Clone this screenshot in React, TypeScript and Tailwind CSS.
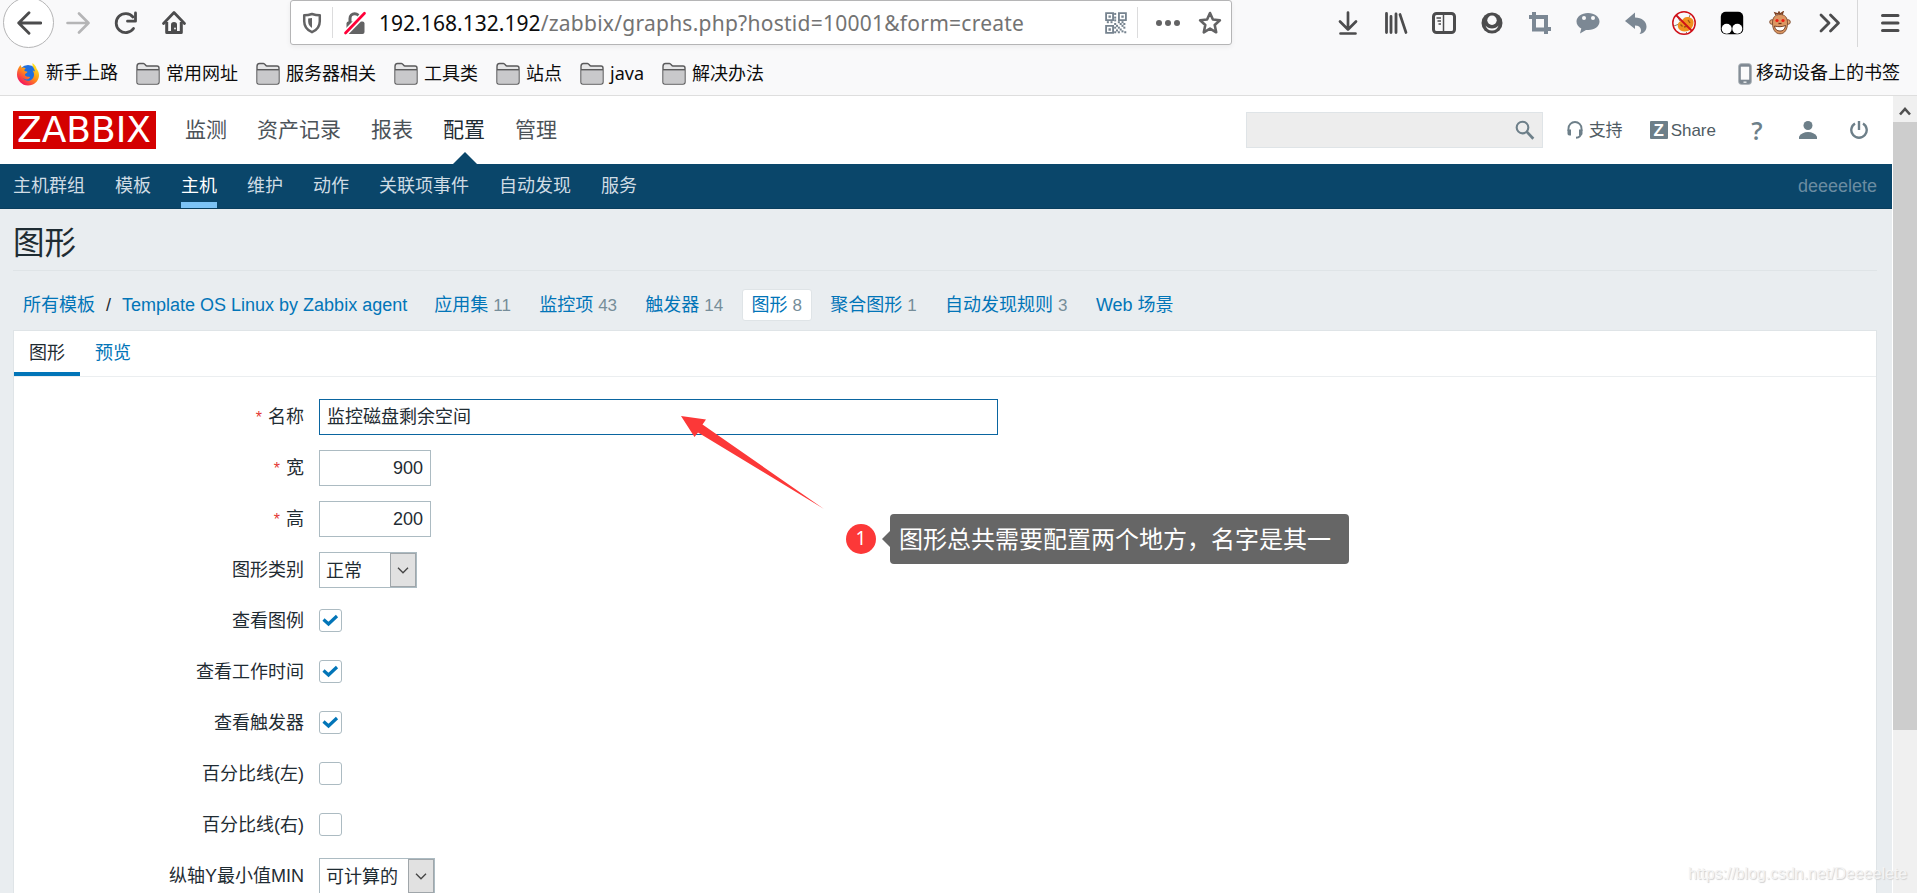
import type { ReactNode } from "react";
import clsx from "clsx";

const bookmarks = ["常用网址", "服务器相关", "工具类", "站点", "java", "解决办法"];
const mainMenu = ["监测", "资产记录", "报表", "配置", "管理"];
const subMenu = ["主机群组", "模板", "主机", "维护", "动作", "关联项事件", "自动发现", "服务"];
const hostTabs = [
  { label: "应用集", count: 11 },
  { label: "监控项", count: 43 },
  { label: "触发器", count: 14 },
  { label: "图形", count: 8, active: true },
  { label: "聚合图形", count: 1 },
  { label: "自动发现规则", count: 3 },
  { label: "Web 场景" },
];

type IconProps = { children: ReactNode; size?: number; className?: string };

function Icon({ children, size = 24, className }: IconProps) {
  return (
    <svg width={size} height={size} viewBox="0 0 24 24" fill="none" className={clsx("shrink-0", className)}>
      {children}
    </svg>
  );
}

function NavButtons() {
  return (
    <div className="flex h-[45px] w-[290px] shrink-0 items-center pl-[3px]">
      <div className="-mt-[3px] -mb-[3px] flex h-[51px] w-[51px] items-center justify-center rounded-full border border-[#b5b5b6] bg-white text-[#4c4c4d]">
        <Icon size={26}>
          <path d="M23 12H2.5M12 2.5L2.5 12l9.5 9.5" stroke="currentColor" strokeWidth="2.6" strokeLinecap="round" strokeLinejoin="round" />
        </Icon>
      </div>
      <Icon className="ml-[12px] text-[#b5b5b6]">
        <path d="M1.5 12h21M13 2.5l9.5 9.5-9.5 9.5" stroke="currentColor" strokeWidth="2.6" strokeLinecap="round" strokeLinejoin="round" />
      </Icon>
      <Icon className="ml-6 text-[#4c4c4d]">
        <path d="M19.5 17.5A9.500 9.500 0 1 1 19 6" stroke="currentColor" strokeWidth="2.8" strokeLinecap="round" />
        <path d="M21.500 2v8.200h-8" stroke="currentColor" strokeWidth="2.8" strokeLinecap="round" strokeLinejoin="round" />
      </Icon>
      <Icon className="ml-6 text-[#4c4c4d]">
        <path d="M1.5 12.5L12 1.5l10.5 11" stroke="currentColor" strokeWidth="2.7" strokeLinecap="round" strokeLinejoin="round" />
        <path d="M4.7 11v10.500h14.600V11" stroke="currentColor" strokeWidth="3" strokeLinejoin="round" />
        <path d="M9 13.500a3 2.500 0 0 1 6 0V22H9z" fill="currentColor" />
        <circle cx="13" cy="17.500" r="0.9" fill="#f9f9fa" />
      </Icon>
    </div>
  );
}

function QrIcon() {
  const dots = [
    [11, 2], [11, 6], [11, 9], [3, 11], [7, 11], [11, 13], [15, 11], [19, 11], [13, 15], [17, 13],
    [21, 13], [15, 17], [19, 15], [11, 17], [13, 20], [17, 19], [21, 17], [15, 22], [19, 21], [11, 22], [22, 22],
  ];
  return (
    <Icon size={22} className="text-[#76838f]">
      <path d="M1.2 1.2h7.600v7.600H1.200zM15.200 1.200h7.600v7.600h-7.600zM1.200 15.200h7.600v7.600H1.200z" stroke="currentColor" strokeWidth="2" />
      <path d="M3.800 3.800h2.600v2.600H3.800zM17.800 3.800h2.600v2.600h-2.600zM3.800 17.800h2.600v2.600H3.800z" fill="currentColor" />
      {dots.map(([x, y]) => (
        <rect key={`${x}-${y}`} x={x - 1} y={y - 1} width="2.2" height="2.2" fill="currentColor" />
      ))}
    </Icon>
  );
}

function UrlBar() {
  return (
    <div className="flex h-[45px] w-[942px] shrink-0 items-center rounded-[3px] border border-[#b5b5b6] bg-white pl-[10px] text-[#636364] shadow-[0_2px_5px_rgba(0,0,0,0.06)]">
      <Icon size={22}>
        <path d="M12 2.200c3 1 5.500 1.400 8.500 1.400V10c0 6-3.200 9.700-8.500 12C6.700 19.700 3.500 16 3.500 10V3.600c3 0 5.500-.4 8.500-1.400z" stroke="currentColor" strokeWidth="2.7" strokeLinejoin="round" />
        <path d="M12 6.500v11c-3-2-4.200-4.300-4.200-7.300V7.200z" fill="currentColor" />
      </Icon>
      <span className="ml-[9px] h-[31px] w-px bg-[#dcdcdd]" />
      <Icon className="ml-[10px]">
        <path d="M7 11V7.500a4.700 4.700 0 0 1 9.400 0V11" stroke="currentColor" strokeWidth="3" />
        <rect x="3.5" y="10.5" width="18" height="12.5" rx="2" fill="currentColor" />
        <path d="M2 22.500L22 2" stroke="#fff" strokeWidth="6" />
        <path d="M2.500 22L21.500 2.300" stroke="#ff0039" strokeWidth="2.7" strokeLinecap="round" />
      </Icon>
      <span className="ml-[12px] w-[646px] whitespace-nowrap pt-[2px] font-['Noto_Sans',sans-serif] text-[21px] tracking-[0.25px] text-[#737373]">
        <span className="tracking-[0.04px] text-[#0c0c0d]">192.168.132.192</span>/zabbix/graphs.php?hostid=10001&amp;form=create
      </span>
      <span className="ml-[80px] flex">
        <QrIcon />
      </span>
      <span className="ml-[10px] h-[31px] w-px bg-[#dcdcdd]" />
      <Icon className="ml-[18px]">
        <circle cx="3" cy="12" r="3" fill="currentColor" />
        <circle cx="12" cy="12" r="3" fill="currentColor" />
        <circle cx="21" cy="12" r="3" fill="currentColor" />
      </Icon>
      <Icon className="ml-[18px]">
        <path d="M12 2l2.900 6.500 7 .8-5.200 4.700 1.500 7.300-6.200-3.700-6.200 3.700 1.500-7.300L2.100 9.300l7-.8z" stroke="currentColor" strokeWidth="2.6" strokeLinejoin="round" />
      </Icon>
    </div>
  );
}

function ToolbarIcons() {
  return (
    <div className="ml-auto flex h-[46px] items-center gap-6 text-[#4c4c4d]">
      <Icon>
        <path d="M12 1.500v17M4 10.500l8 8 8-8M4.500 22.500h15" stroke="currentColor" strokeWidth="2.7" strokeLinecap="round" strokeLinejoin="round" />
      </Icon>
      <Icon>
        <path d="M2.500 2.500v19M7 5.500v16M12 3v18.500" stroke="currentColor" strokeWidth="2.8" strokeLinecap="round" />
        <path d="M16 3.500l6 18" stroke="currentColor" strokeWidth="2.7" strokeLinecap="round" />
      </Icon>
      <Icon>
        <rect x="1.5" y="2.5" width="21" height="19" rx="3" stroke="currentColor" strokeWidth="3" />
        <path d="M11.500 3v18" stroke="currentColor" strokeWidth="1.5" />
        <path d="M4.500 7h4.500M5.500 10h3.500M6.500 13h2.500" stroke="currentColor" strokeWidth="1.5" />
      </Icon>
      <Icon>
        <circle cx="12" cy="12" r="10.5" fill="currentColor" />
        <circle cx="12" cy="9.3" r="4.7" fill="#f9f9fa" />
        <path d="M5.500 14.500c1.500 2 3.800 3 6.500 3s5-1 6.500-3c-.8 3-3.300 5-6.500 5s-5.700-2-6.500-5z" fill="#f9f9fa" />
      </Icon>
      <Icon className="text-[#7c8894]">
        <path d="M6 1v17.500h12.500M1 6h17v17M18 18h5" stroke="currentColor" strokeWidth="4" />
      </Icon>
      <Icon className="text-[#7c8894]">
        <path d="M12 2C5.500 2 .5 5.700.5 10.500c0 3 1.900 5.500 4.800 7L4 22.500l6-3.600c8 1 13.500-3.200 13.500-8.400C23.500 5.700 18.500 2 12 2z" fill="currentColor" />
        <circle cx="8" cy="7" r="2" fill="#f9f9fa" />
        <circle cx="17" cy="7" r="2" fill="#f9f9fa" />
      </Icon>
      <Icon className="text-[#7c8894]">
        <path d="M1 10l10-8.500V6.500c7 0 11.500 4 11.500 9 0 4-2.500 7-7 7.500 2.500-2 2.600-8.500-4.500-8.500V18z" fill="currentColor" />
      </Icon>
      <Icon>
        <path d="M5 5l3 5M18 4l-2 5M2 15l5-2M14 21l2 2" stroke="#8b7a63" strokeWidth="1" />
        <path d="M6 13c1-3 4-3 6-6 3-2 9-.5 9.500 3.500.5 5-3 10-9 10-5 0-7.500-4-6.500-7.500z" fill="#f0911e" />
        <path d="M8.500 13.500l2 2M12 16l4-1M16 9l2 3" stroke="#9c5412" strokeWidth="1.3" />
        <circle cx="12" cy="12" r="11.2" stroke="#cf1018" strokeWidth="1.5" />
        <path d="M4 4l16 16" stroke="#cf1018" strokeWidth="1.8" />
      </Icon>
      <Icon>
        <rect x="0.8" y="0.8" width="22.4" height="22.4" rx="5" fill="#000" />
        <circle cx="6.7" cy="17.7" r="5" fill="#fff" />
        <circle cx="17.3" cy="17.7" r="5" fill="#fff" />
      </Icon>
      <Icon>
        <path d="M8 4l-1-2 3 1 1-2 1 2 3-2-1 3" stroke="#7c3f20" strokeWidth="1.4" />
        <circle cx="4" cy="11" r="2.3" fill="#e8a878" stroke="#7c4a2c" strokeWidth="0.9" />
        <circle cx="20" cy="11" r="2.3" fill="#e8a878" stroke="#7c4a2c" strokeWidth="0.9" />
        <path d="M12 3.500c5 0 7.500 3 7.500 8.500 0 6-2.500 10.800-7.500 10.800S4.500 18 4.500 12C4.500 6.500 7 3.500 12 3.500z" fill="#dc9762" stroke="#7c4a2c" strokeWidth="0.9" />
        <circle cx="9" cy="9.5" r="1.6" fill="#f01c14" />
        <circle cx="15" cy="9.5" r="1.6" fill="#f01c14" />
        <path d="M10.500 12.500h3" stroke="#6b3319" strokeWidth="1.3" />
        <path d="M6.500 15c3.500 1 7.500 1 11-.5-.5 4-2.500 5.500-5.500 5.500s-5-1.500-5.500-5z" fill="#fff" stroke="#6b3319" strokeWidth="0.9" />
      </Icon>
      <Icon className="ml-[2px]">
        <path d="M3 4l8 8-8 8M12.500 4l8 8-8 8" stroke="currentColor" strokeWidth="2.8" strokeLinecap="round" strokeLinejoin="round" />
      </Icon>
      <span className="-ml-[9px] h-12 w-px bg-[#d8d8d9]" />
      <Icon className="-ml-[4px] mr-[15px]">
        <path d="M4.500 4.500h15.500M4.500 12h15.500M4.500 19.500h15.500" stroke="currentColor" strokeWidth="3" strokeLinecap="round" />
      </Icon>
    </div>
  );
}

function FirefoxIcon() {
  return (
    <Icon>
      <defs>
        <linearGradient id="fox" x1="0.8" y1="0.1" x2="0.2" y2="0.9">
          <stop offset="0" stopColor="#ffe226" />
          <stop offset="0.45" stopColor="#ff9516" />
          <stop offset="1" stopColor="#f5155c" />
        </linearGradient>
      </defs>
      <circle cx="12" cy="12.5" r="9.5" fill="#1e6fe0" />
      <path d="M16.500 1c2.500 2 3.500 3.500 4 5.500 2 2.500 2.700 5 2.500 7.500-.6 5.500-5 9.500-11 9.500S1 18.500 1 12.500C1 9 2 6 4.500 3l1.300 3c1.200-.6 2.500-.5 4 .2-1 .6-1.600 1.400-1.300 2.800l3 .8c-.2 1.500-2.700 1.700-2.700 3.200 1.200 2.500 4.700 1 5.200 2.500-1.500 2.500-5 2.500-7 .5 2.500 4.500 10.500 3.500 11-3 0-2-.5-3.500-1.500-4.500 1.300.2 2 .6 2.500 1.200-.5-3.500-3-4.500-2.500-8.700z" fill="url(#fox)" />
    </Icon>
  );
}

function FolderIcon() {
  return (
    <Icon>
      <path d="M1 4.500c0-2 .7-3 2.500-3h4c1.500 0 2 2.500 3.500 2.500h10c1.500 0 2 .5 2 2v14c0 1.500-.5 2-2 2H3c-1.500 0-2-.5-2-2z" fill="#e6e6e7" stroke="#5a5a5b" strokeWidth="1.4" />
      <path d="M1.500 8h21v12c0 1.300-.4 1.700-1.700 1.700H3.200c-1.300 0-1.700-.4-1.700-1.700z" fill="#c9c9cb" />
      <path d="M1 7.700h22" stroke="#5a5a5b" strokeWidth="1.4" />
    </Icon>
  );
}

function BookmarksBar() {
  return (
    <div className="flex h-[49px] items-center pl-4 pr-[17px] pt-[6px] text-[18px] text-[#0c0c0d]">
      <FirefoxIcon />
      <span className="ml-[6px]">新手上路</span>
      {bookmarks.map((name) => (
        <span key={name} className="ml-[18px] flex items-center gap-[6px] font-['Noto_Sans','Noto_Sans_CJK_SC',sans-serif]">
          <FolderIcon />
          {name}
        </span>
      ))}
      <span className="ml-auto flex items-center gap-[4px]">
        <svg width="14" height="22" viewBox="0 0 14 22">
          <rect x="0.7" y="0.7" width="12.6" height="20.6" rx="2.5" fill="#7d8791" stroke="#a9b0b6" />
          <rect x="2.8" y="3.7" width="8.4" height="13" fill="#fbfbfb" />
          <path d="M5.500 19.200h3" stroke="#e6e8ea" strokeWidth="1.5" />
        </svg>
        移动设备上的书签
      </span>
    </div>
  );
}

function Header() {
  return (
    <header className="flex h-[68px] items-center bg-white pl-[13px] pr-6">
      <div className="flex h-[38px] w-[143px] items-center justify-center bg-[#d40000] pr-px font-['DejaVu_Sans',sans-serif] text-[36px] leading-none text-white">
        ZABBIX
      </div>
      <nav className="ml-[29px] flex h-full gap-[30px] text-[21px] leading-[68px] text-[#4c5359]">
        {mainMenu.map((item) => (
          <a key={item} className={clsx("relative", item === "配置" && "text-[#1f2c33]")}>
            {item}
            {item === "配置" && (
              <svg className="absolute bottom-0 left-[10px]" width="24" height="12" viewBox="0 0 24 12">
                <path d="M0 12L12 0l12 12z" fill="#0a466a" />
              </svg>
            )}
          </a>
        ))}
      </nav>
      <div className="ml-auto flex items-center text-[17px] text-[#4f5b63]">
        <div className="flex h-9 w-[297px] items-center justify-end border border-[#dfe4e7] bg-[#ededed] pr-[7px] text-[#6d7f89]">
          <Icon size={20}>
            <circle cx="9" cy="9" r="7" stroke="currentColor" strokeWidth="2.5" />
            <path d="M14 14l8 8.500" stroke="currentColor" strokeWidth="3.3" />
          </Icon>
        </div>
        <span className="ml-[23px] flex items-center gap-[5px]">
          <svg width="18" height="18" viewBox="0 0 18 18" fill="none" className="text-[#6d7f89]">
            <path d="M2.500 10V7.500a6.500 6.500 0 0 1 13 0V10M15 12c0 3-1.500 4.500-5 4.700" stroke="currentColor" strokeWidth="1.9" />
            <path d="M1.500 8.500h3.500v6H3.500c-1.300 0-2-.7-2-2zM16.500 8.500H13v6h1.500c1.300 0 2-.7 2-2z" fill="currentColor" />
          </svg>
          <span className="pt-[2px]">支持</span>
        </span>
        <span className="ml-[27px] flex items-center gap-[3px]">
          <span className="flex h-[18px] w-[18px] items-center justify-center rounded-[1px] bg-[#6d7f89] text-[17px] font-bold leading-none text-white">Z</span>
          <span className="pt-[2px]">Share</span>
        </span>
        <span className="ml-[35px] w-[12px] text-center font-['Open_Sans',sans-serif] text-[25px] font-semibold leading-[20px] text-[#6d7f89]">?</span>
        <svg width="18" height="18" viewBox="0 0 18 18" className="ml-[36px] text-[#6d7f89]">
          <circle cx="9" cy="4.5" r="4.5" fill="currentColor" />
          <path d="M0 18v-2.500C2 12.500 5 11 9 11s7 1.500 9 4.500V18z" fill="currentColor" />
        </svg>
        <svg width="18" height="18" viewBox="0 0 18 18" fill="none" className="ml-[33px] text-[#6d7f89]">
          <path d="M5 2.500a7.700 7.700 0 1 0 8 0M9 0v9" stroke="currentColor" strokeWidth="2.4" />
        </svg>
      </div>
    </header>
  );
}

function SubNav() {
  return (
    <nav className="flex h-[45px] items-start gap-[30px] border-b border-[#093e5e] bg-[#0a466a] px-[13px] text-[18px] leading-[45px] text-[#cfdce4]">
      {subMenu.map((item) => (
        <a key={item} className={clsx("h-[44px]", item === "主机" && "border-b-[6px] border-[#7cc3f5] text-white")}>
          {item}
        </a>
      ))}
      <span className="ml-auto mr-[2px] text-[#6b8ca1]">deeeelete</span>
    </nav>
  );
}

function HostTabs() {
  return (
    <div className="flex h-[59px] items-center pl-[10px] text-[18px] text-[#0275b8]">
      <span className="mt-[10px] whitespace-nowrap">
        所有模板<span className="mx-[11px] text-[#1f2c33]">/</span>Template OS Linux by Zabbix agent
      </span>
      <div className="ml-[17px] mt-[9px] flex gap-[8.3px]">
        {hostTabs.map(({ label, count, active }) => (
          <span
            key={label}
            className={clsx(
              "flex h-[32px] items-center gap-[5px] whitespace-nowrap rounded-[3px] border px-[9px] leading-none",
              active ? "border-[#dfe4e7] bg-white" : "border-transparent"
            )}
          >
            {label}
            {count && <span className="text-[17px] text-[#768d99]">{count}</span>}
          </span>
        ))}
      </div>
    </div>
  );
}

function Row({ label, required, children }: { label: string; required?: boolean; children: ReactNode }) {
  return (
    <div className="flex h-9 shrink-0 items-center">
      <label className="w-[290px] text-right">
        {required && <span className="mr-[6px] text-[16px] text-[#e33734]">*</span>}
        {label}
      </label>
      <div className="ml-[15px] flex">{children}</div>
    </div>
  );
}

function Select({ value, className }: { value: string; className: string }) {
  return (
    <div className={clsx("flex h-9 items-center justify-between border border-[#acbbc2] pl-[6px]", className)}>
      <span className="pt-[2px]">{value}</span>
      <span className="flex h-[34px] w-[26px] items-center justify-center border border-[#a0a6aa] bg-[#e1e1e1]">
        <svg width="12" height="7" viewBox="0 0 12 7" fill="none">
          <path d="M1 0.800l5 5 5-5" stroke="#444" strokeWidth="1.3" />
        </svg>
      </span>
    </div>
  );
}

function Checkbox({ checked }: { checked?: boolean }) {
  return (
    <span className="mb-px flex h-[23px] w-[23px] items-center justify-center rounded-[3px] border border-[#acbbc2] bg-white">
      {checked && (
        <svg width="17" height="13" viewBox="0 0 17 13" fill="none">
          <path d="M1.500 5.500l5 4.500 8.500-8" stroke="#0275b8" strokeWidth="3.2" />
        </svg>
      )}
    </span>
  );
}

function GraphForm() {
  return (
    <div className="flex flex-col gap-[15px] pt-[22px] text-[18px]">
      <Row label="名称" required>
        <div className="flex h-9 w-[679px] items-center border border-[#0a65a0] pl-[7px]">监控磁盘剩余空间</div>
      </Row>
      <Row label="宽" required>
        <div className="flex h-9 w-[112px] items-center justify-end border border-[#acbbc2] pr-[7px]">900</div>
      </Row>
      <Row label="高" required>
        <div className="flex h-9 w-[112px] items-center justify-end border border-[#acbbc2] pr-[7px]">200</div>
      </Row>
      <Row label="图形类别">
        <Select value="正常" className="w-[98px]" />
      </Row>
      <Row label="查看图例">
        <Checkbox checked />
      </Row>
      <Row label="查看工作时间">
        <Checkbox checked />
      </Row>
      <Row label="查看触发器">
        <Checkbox checked />
      </Row>
      <Row label="百分比线(左)">
        <Checkbox />
      </Row>
      <Row label="百分比线(右)">
        <Checkbox />
      </Row>
      <Row label="纵轴Y最小值MIN">
        <Select value="可计算的" className="w-[116px]" />
      </Row>
    </div>
  );
}

// Red arrow, step number and callout drawn over the form
function Annotation() {
  return (
    <>
      <svg className="absolute left-[680px] top-[415px]" width="145" height="95" viewBox="0 0 145 95">
        <path d="M1 1l25 3.500-3.500 5L144 94 18 17.500l-3.500 4.500z" fill="#fc3838" />
      </svg>
      <div className="absolute left-[846px] top-[514px] flex items-center">
        <span className="flex h-[30px] w-[30px] items-center justify-center rounded-full bg-[#fc3838] pb-px font-['Noto_Sans',sans-serif] text-[19px] leading-none text-white">
          1
        </span>
        <svg className="ml-[6px]" width="8" height="16" viewBox="0 0 8 16">
          <path d="M8 0L0 8l8 8z" fill="#666" />
        </svg>
        <div className="h-[50px] w-[459px] whitespace-nowrap rounded-[4px] bg-[#666] pl-[9px] text-[24px] leading-[52px] text-white">
          图形总共需要配置两个地方，名字是其一
        </div>
      </div>
      <div className="absolute left-[1688px] top-[864px] whitespace-nowrap text-[16px] leading-[20px] tracking-[-0.05px] text-[#f4f4f4] [text-shadow:1px_1px_1px_#d0d0d0]">
        https://blog.csdn.net/Deeeelete
      </div>
    </>
  );
}

export default function App() {
  return (
    <div className="relative flex h-[893px] w-[1917px] flex-col overflow-hidden bg-[#f9f9fa] font-['Liberation_Sans','Noto_Sans_CJK_SC',sans-serif] text-[#1f2c33]">
      <div className="flex h-[96px] shrink-0 flex-col border-b border-[#dedede]">
        <div className="flex h-[46px] shrink-0">
          <NavButtons />
          <UrlBar />
          <ToolbarIcons />
        </div>
        <BookmarksBar />
      </div>
      <div className="flex min-h-0 flex-1">
        <div className="flex w-[1892px] flex-col bg-[#e9edf0]">
          <Header />
          <SubNav />
          <main className="flex min-h-0 flex-1 flex-col pl-[13px] pr-[15px]">
            <h1 className="h-[62px] shrink-0 border-b border-[#dfe4e7] text-[31.5px] leading-[68px]">图形</h1>
            <HostTabs />
            <section className="min-h-0 flex-1 overflow-hidden border border-b-0 border-[#dfe4e7] bg-white">
              <div className="flex h-[46px] border-b border-[#ebeef0] text-[18px] leading-[45px]">
                <span className="h-[45px] w-[66px] border-b-4 border-[#0275b8] text-center">图形</span>
                <span className="ml-[15px] text-[#0275b8]">预览</span>
              </div>
              <GraphForm />
            </section>
          </main>
        </div>
        <div className="flex w-[25px] flex-col border-l border-white bg-[#f0f0f0]">
          <div className="flex h-[26px] items-center justify-center pt-[4px]">
            <svg width="12" height="10" viewBox="0 0 12 10" fill="none">
              <path d="M1 8.500l5-5.500 5 5.500" stroke="#505050" strokeWidth="2.6" />
            </svg>
          </div>
          <div className="h-[608px] bg-[#cdcdcd]" />
        </div>
      </div>
      <Annotation />
    </div>
  );
}
